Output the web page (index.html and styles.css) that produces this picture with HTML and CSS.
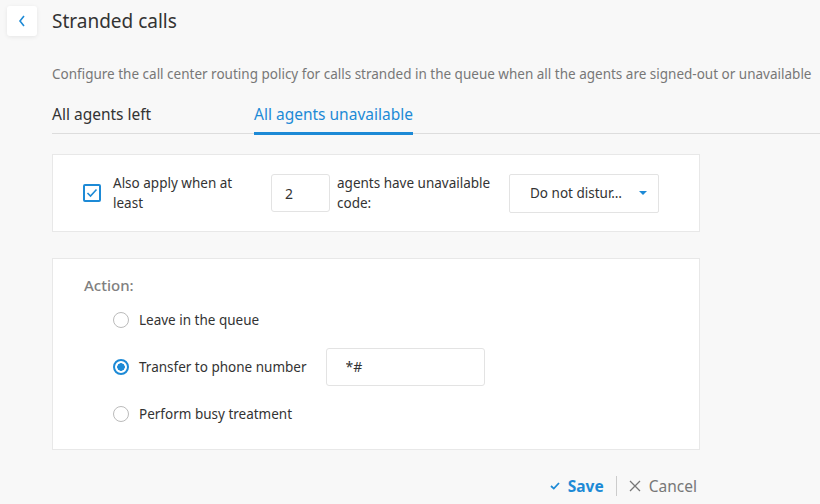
FILE: index.html
```html
<!DOCTYPE html>
<html lang="en">
<head>
    <meta charset="UTF-8">
    <meta name="viewport" content="width=device-width, initial-scale=1.0">
    <title>Stranded calls</title>
    <link rel="stylesheet" href="styles.css">
</head>
<body>
    <div class="header">
        <button class="back">
            <svg width="10" height="12" viewBox="0 0 10 12"><path d="M7 1 L3 6 L7 11" fill="none" stroke="#1d8ad6" stroke-width="1.6"/></svg>
        </button>
        <h1>Stranded calls</h1>
    </div>

    <div class="content">
        <p class="desc">Configure the call center routing policy for calls stranded in the queue when all the agents are signed-out or unavailable</p>

        <div class="tabs">
            <div class="tab">All agents left</div>
            <div class="tab active">All agents unavailable</div>
        </div>

        <div class="card condition">
            <span class="checkbox">
                <svg width="12" height="10" viewBox="0 0 12 10"><path d="M1.5 5 L4.5 8 L10.5 1.5" fill="none" stroke="#1d8ad6" stroke-width="1.6"/></svg>
            </span>
            <span class="label first">Also apply when at least</span>
            <input type="text" class="field count" value="2">
            <span class="label second">agents have unavailable code:</span>
            <div class="select">
                <span>Do not distur…</span>
                <span class="caret"></span>
            </div>
        </div>

        <div class="card action">
            <div class="action-title">Action:</div>
            <div class="option">
                <span class="radio"></span>
                <span>Leave in the queue</span>
            </div>
            <div class="option">
                <span class="radio checked"></span>
                <span>Transfer to phone number</span>
                <input type="text" class="field phone" value="*#">
            </div>
            <div class="option">
                <span class="radio"></span>
                <span>Perform busy treatment</span>
            </div>
        </div>

        <div class="footer">
            <span class="save">
                <svg width="10" height="8" viewBox="0 0 10 8"><path d="M1 4 L3.8 6.6 L9 1" fill="none" stroke="#1d8ad6" stroke-width="1.8"/></svg>
                Save
            </span>
            <span class="sep"></span>
            <span class="cancel">
                <svg width="12" height="12" viewBox="0 0 12 12"><path d="M1 1 L11 11 M11 1 L1 11" fill="none" stroke="#777" stroke-width="1.3"/></svg>
                Cancel
            </span>
        </div>
    </div>
</body>
</html>
```

FILE: styles.css
```css
body {
    margin: 0;
    background-color: #f8f8f8;
    font-family: "Noto Sans", "Open Sans", sans-serif;
    color: #333;
}
.header {
    display: flex;
    align-items: center;
    height: 42px;
    padding-left: 7px;
}
.back {
    width: 30px;
    height: 30px;
    border: none;
    border-radius: 3px;
    background-color: white;
    box-shadow: 0 1px 4px rgba(0, 0, 0, 0.08);
    display: flex;
    align-items: center;
    justify-content: center;
    padding: 0;
    margin-right: 15px;
}
h1 {
    margin: 0;
    font-size: 19px;
    font-weight: normal;
    color: #333;
}
.content {
    padding-left: 52px;
}
.desc {
    margin: 23px 0 0 0;
    font-size: 13.5px;
    color: #777;
    white-space: nowrap;
}
.tabs {
    display: flex;
    margin-top: 20px;
    border-bottom: 1px solid #ddd;
}
.tab {
    font-size: 15.5px;
    padding-bottom: 7px;
    border-bottom: 3px solid transparent;
    margin-bottom: -2px;
}
.tab:first-child {
    width: 202px;
}
.tab.active {
    color: #1d8ad6;
    border-bottom-color: #1d8ad6;
}
.card {
    width: 648px;
    background-color: white;
    border: 1px solid #e8e8e8;
    box-sizing: border-box;
}
.condition {
    margin-top: 20px;
    height: 78px;
    display: flex;
    align-items: center;
    padding-left: 30px;
    font-size: 13.5px;
}
.checkbox {
    width: 14px;
    height: 14px;
    border: 2px solid #1d8ad6;
    border-radius: 2px;
    display: flex;
    align-items: center;
    justify-content: center;
    margin-right: 12px;
}
.label {
    line-height: 20px;
}
.label.first {
    width: 150px;
    margin-right: 8px;
}
.label.second {
    width: 160px;
    margin-left: 7px;
    margin-right: 12px;
}
.field {
    font-family: inherit;
    font-size: 14px;
    color: #333;
    border: 1px solid #e3e3e3;
    border-radius: 3px;
    box-sizing: border-box;
    height: 38px;
    outline: none;
    background: white;
}
.count {
    width: 59px;
    padding-left: 13px;
}
.select {
    width: 150px;
    height: 39px;
    box-sizing: border-box;
    border: 1px solid #e3e3e3;
    border-radius: 2px;
    display: flex;
    align-items: center;
    justify-content: space-between;
    padding: 0 11px 0 20px;
}
.caret {
    width: 0;
    height: 0;
    border-left: 4px solid transparent;
    border-right: 4px solid transparent;
    border-top: 4px solid #1d8ad6;
}
.action {
    margin-top: 26px;
    height: 192px;
    padding: 16px 0 0 31px;
    font-size: 13.5px;
}
.action-title {
    font-size: 15px;
    font-weight: 500;
    color: #808080;
    margin-bottom: 1px;
}
.option {
    display: flex;
    align-items: center;
    height: 47px;
    padding-left: 29px;
}
.radio {
    width: 14px;
    height: 14px;
    border: 1px solid #bbb;
    border-radius: 50%;
    margin-right: 10px;
    box-sizing: content-box;
}
.radio.checked {
    border: 2px solid #1d8ad6;
    width: 12px;
    height: 12px;
    background: radial-gradient(circle, #1d8ad6 0, #1d8ad6 3.5px, white 4px);
}
.phone {
    width: 159px;
    margin-left: 19px;
    padding-left: 19px;
}
.footer {
    width: 645px;
    display: flex;
    justify-content: flex-end;
    align-items: center;
    margin-top: 25px;
    font-size: 15.5px;
}
.save {
    color: #1d8ad6;
    font-weight: bold;
    display: flex;
    align-items: center;
    gap: 8px;
}
.sep {
    width: 1px;
    height: 20px;
    background-color: #ccc;
    margin: 0 12px;
}
.cancel {
    color: #777;
    display: flex;
    align-items: center;
    gap: 8px;
}
```
